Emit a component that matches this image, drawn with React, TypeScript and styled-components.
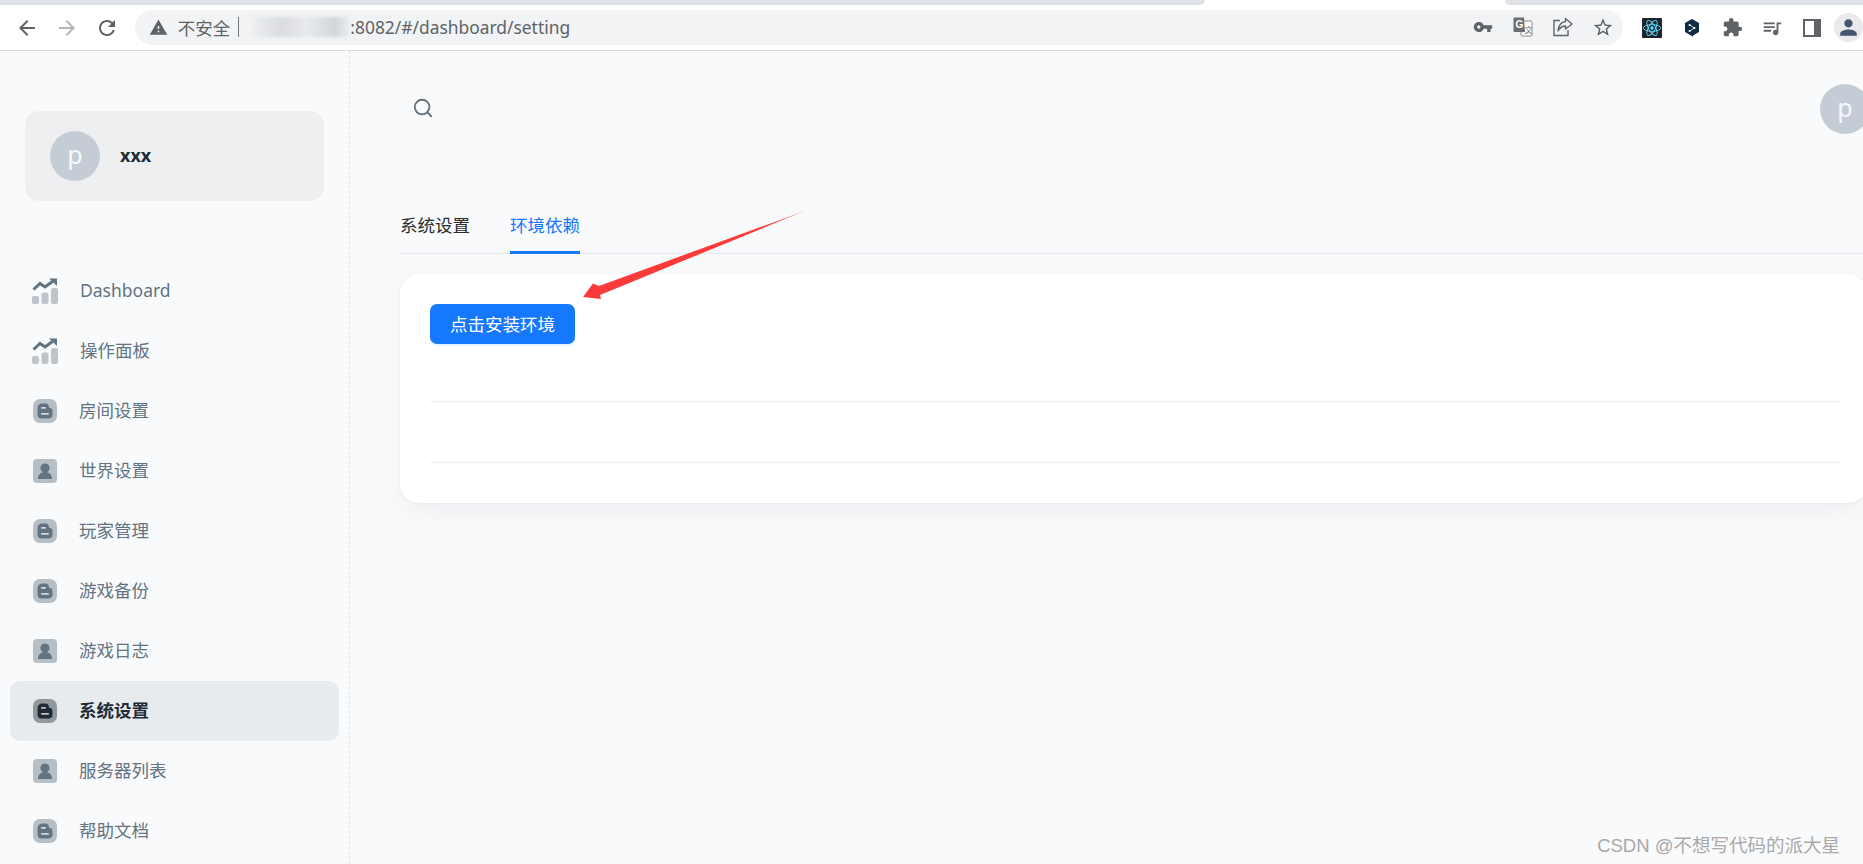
import React from "react";
import styled, { createGlobalStyle } from "styled-components";
import { Search } from "lucide-react";
import {
  MdArrowBack,
  MdArrowForward,
  MdExtension,
  MdPerson,
  MdQueueMusic,
  MdRefresh,
  MdStarBorder,
  MdVpnKey,
  MdWarning,
} from "react-icons/md";

const FONT = `"Noto Sans", "Noto Sans CJK SC", sans-serif`;

const GlobalStyle = createGlobalStyle`
  html, body {
    margin: 0;
    padding: 0;
    background: #f9fafb;
  }
  * {
    box-sizing: border-box;
  }
`;

const Page = styled.div`
  position: relative;
  display: flex;
  flex-direction: column;
  width: 1863px;
  height: 864px;
  overflow: hidden;
  font-family: ${FONT};
  background: #f9fafb;
`;

/* ---------- browser chrome ---------- */

const TabStrip = styled.div`
  display: grid;
  grid-template-columns: 1205px 300px 1fr;
  height: 10px;
  margin-bottom: -5px;
  background: #fff;
`;

const TabPiece = styled.div<{ $left?: boolean; $right?: boolean }>`
  height: 5px;
  background: #dee1e6;
  border-bottom-right-radius: ${(p) => (p.$left ? "6px" : "0")};
  border-bottom-left-radius: ${(p) => (p.$right ? "6px" : "0")};
`;

const TabGap = styled.div`
  height: 5px;
  background: #fff;
`;

const Toolbar = styled.div`
  display: flex;
  align-items: center;
  height: 46px;
  flex: none;
  background: #fff;
  border-bottom: 1px solid #dadce0;
`;

const NavButtons = styled.div`
  display: flex;
  align-items: center;
  gap: 16px;
  width: 135px;
  padding-left: 15px;
`;

const NavIcon = styled.span<{ $off?: boolean }>`
  display: flex;
  color: ${(p) => (p.$off ? "#b4b6b9" : "#5f6368")};
`;

const Omnibox = styled.div`
  display: flex;
  align-items: center;
  width: 1490px;
  height: 35px;
  margin-bottom: 1px;
  padding-left: 14px;
  border-radius: 18px;
  background: #f1f3f4;
  color: #5f6368;
  font-size: 17.4px;
`;

const Insecure = styled.span`
  margin: 0 0 0 10px;
  font-size: 17.5px;
  white-space: nowrap;
`;

const Pipe = styled.span`
  width: 1px;
  height: 20px;
  margin: 0 14px 0 8px;
  background: #70757a;
`;

const BlurredHost = styled.span`
  display: block;
  width: 97px;
  height: 20px;
  border-radius: 4px;
  background: linear-gradient(90deg, #eceef0 0%, #d9dbde 30%, #e8eaec 55%, #d3d6d9 85%, #eceef0 100%);
  filter: blur(1.5px);
`;

const UrlText = styled.span`
  white-space: nowrap;
`;

const OmniActions = styled.div`
  display: flex;
  align-items: center;
  gap: 18px;
  margin-left: auto;
  padding-right: 9px;
  color: #5f6368;
`;

const OmniSlot = styled.span`
  display: flex;
  align-items: center;
  justify-content: center;
  width: 22px;
`;

const Extensions = styled.div`
  display: flex;
  align-items: center;
  gap: 18px;
  margin-left: 18px;
  color: #5f6368;
`;

const ExtSlot = styled.span`
  display: flex;
  align-items: center;
  justify-content: center;
  width: 22px;
  height: 22px;
`;

const Profile = styled.span`
  display: flex;
  align-items: center;
  justify-content: center;
  flex: none;
  width: 29px;
  height: 29px;
  margin-left: 11px;
  border-radius: 50%;
  background: #e8eaed;
  color: #44546f;
`;

/* ---------- dashboard ---------- */

const Body = styled.div`
  display: flex;
  flex: 1;
  min-height: 0;
`;

const Sidebar = styled.aside`
  flex: none;
  width: 350px;
  padding: 60px 10px 0;
  border-right: 1px dashed #dfe3e8;
`;

const Account = styled.div`
  display: flex;
  align-items: center;
  gap: 20px;
  width: 299px;
  height: 90px;
  margin-left: 15px;
  padding-left: 25px;
  border-radius: 14px;
  background: #eeeff1;
`;

const Avatar = styled.div`
  display: flex;
  align-items: center;
  justify-content: center;
  flex: none;
  width: 50px;
  height: 50px;
  border-radius: 50%;
  background: #c4cdd5;
  color: #f7f8f9;
  font-size: 25px;
  line-height: 1;
  padding-bottom: 3px;
`;

const AccountName = styled.span`
  padding-bottom: 2px;
  color: #212b36;
  font-size: 18px;
  font-weight: 700;
`;

const Nav = styled.nav`
  display: flex;
  flex-direction: column;
  margin-top: 60px;
`;

const NavItem = styled.div<{ $active?: boolean }>`
  display: flex;
  align-items: center;
  gap: 22px;
  width: 329px;
  height: 60px;
  padding-left: 22px;
  border-radius: 10px;
  background: ${(p) => (p.$active ? "#e8ebee" : "transparent")};
  color: ${(p) => (p.$active ? "#212b36" : "#637381")};
  font-size: 17.5px;
  font-weight: ${(p) => (p.$active ? 700 : 400)};
`;

const NavLabel = styled.span`
  padding-bottom: 3px;
`;

const Main = styled.main`
  flex: 1;
  min-width: 0;
  padding-left: 50px;
`;

const Header = styled.header`
  display: flex;
  align-items: center;
  justify-content: space-between;
  height: 116px;
  padding-left: 12px;
  margin-right: -7px;
  color: #637381;
`;

const SearchIcon = styled(Search)`
  margin-bottom: 2px;
`;

const Tabs = styled.div`
  display: flex;
  gap: 40px;
  height: 60px;
  margin-top: 27px;
  border-bottom: 1px solid #e6e8eb;
`;

const Tab = styled.div<{ $active?: boolean }>`
  display: flex;
  align-items: center;
  height: 60px;
  padding-top: 3px;
  color: ${(p) => (p.$active ? "#1677ff" : "#2b2b2b")};
  border-bottom: 3px solid ${(p) => (p.$active ? "#1677ff" : "transparent")};
  font-size: 17.5px;
`;

const Card = styled.section`
  height: 229px;
  margin: 20px -4px 0 0;
  padding: 30px 27px 0 30px;
  border-radius: 19px;
  background: #fff;
  box-shadow: 0 0 2px rgba(145, 158, 171, 0.2), 0 12px 24px -4px rgba(145, 158, 171, 0.12);
`;

const InstallButton = styled.button`
  display: block;
  width: 145px;
  height: 40px;
  padding: 0 0 2px;
  border: 0;
  border-radius: 7px;
  background: #1677ff;
  color: #fff;
  font-family: ${FONT};
  font-size: 17.5px;
  box-shadow: 0 2px 0 rgba(5, 145, 255, 0.1);
`;

const DividerRow = styled.div<{ $first?: boolean }>`
  height: ${(p) => (p.$first ? "58px" : "61px")};
  border-bottom: 1px solid #efefef;
`;

const ArrowOverlay = styled.svg`
  position: absolute;
  left: 0;
  top: 0;
  pointer-events: none;
`;

const Watermark = styled.div`
  position: absolute;
  right: 23px;
  bottom: 7px;
  color: #a9a9a9;
  font-family: "Liberation Sans", "Noto Sans CJK SC", sans-serif;
  font-size: 18.5px;
  line-height: 22px;
  white-space: nowrap;
`;

/* ---------- drawn icons ---------- */

const ChartIcon = () => (
  <svg width="26" height="26" viewBox="0 0 26 26">
    <rect x="0" y="18" width="7" height="8" rx="2" fill="#637381" opacity="0.4" />
    <rect x="9.5" y="14.5" width="7" height="11.5" rx="2" fill="#637381" opacity="0.4" />
    <rect x="19" y="10" width="7" height="16" rx="2" fill="#637381" opacity="0.4" />
    <path d="M1.5 11.5 L8 5.5 L13 9 L20.5 3.5" fill="none" stroke="#637381" strokeWidth="3" />
    <path d="M17 0.5 H25 V8 Z" fill="#637381" />
  </svg>
);

const BlogIcon = ({ active }: { active?: boolean }) => {
  const dark = active ? "#212b36" : "#637381";
  return (
    <svg width="24" height="24" viewBox="0 0 24 24" style={{ marginLeft: 1 }}>
      <rect width="24" height="24" rx="7" fill={dark} opacity="0.44" />
      <path
        d="M9.5 4.5 H12.5 C15 4.5 16 6.3 16 8.8 C18.3 9 19.5 10 19.5 12 V15.5 C19.5 18 18 19.5 15.5 19.5 H8.5 C6 19.5 4.5 18 4.5 15.5 V9.5 C4.5 6.5 6.5 4.5 9.5 4.5 Z"
        fill={dark}
      />
      <rect x="8" y="8" width="5" height="1.7" rx="0.8" fill="#f9fafb" opacity="0.75" />
      <rect x="8" y="14" width="8" height="1.7" rx="0.8" fill="#f9fafb" opacity="0.75" />
    </svg>
  );
};

const UserIcon = () => (
  <svg width="24" height="24" viewBox="0 0 24 24" style={{ marginLeft: 1 }}>
    <rect width="24" height="24" rx="4" fill="#637381" opacity="0.44" />
    <circle cx="12" cy="9" r="4.6" fill="#637381" />
    <path d="M5 20 C5 15.5 8 13 12 13 C16 13 19 15.5 19 20 Z" fill="#637381" />
  </svg>
);

const TranslateIcon = () => (
  <svg width="20" height="20" viewBox="0 0 20 20">
    <rect x="8" y="4" width="11" height="15" rx="1" fill="#fff" stroke="#8a8d91" />
    <path d="M1.5 0.5 H11 L12 15 H1.5 C0.9 15 0.5 14.6 0.5 14 V1.5 C0.5 0.9 0.9 0.5 1.5 0.5 Z" fill="#6b6e72" />
    <text x="2.6" y="11" fill="#fff" fontSize="10" fontWeight="700" fontFamily="Liberation Sans">
      G
    </text>
    <text x="11.5" y="16" fill="#6b6e72" fontSize="8" fontFamily="Noto Sans CJK SC">
      文
    </text>
  </svg>
);

const ShareIcon = () => (
  <svg width="20" height="20" viewBox="0 0 20 20" fill="none" stroke="#5f6368" strokeWidth="1.4">
    <path d="M7 3.5 H1 V18.5 H15 V13" />
    <path d="M12.5 1.5 L19 7 L12.5 12 V9 C9 9 7 10.5 5 14 C5.5 9 8 5 12.5 4.5 Z" strokeLinejoin="round" />
  </svg>
);

const ReactLogo = () => (
  <svg width="20" height="20" viewBox="0 0 20 20" fill="none" stroke="#61dafb" strokeWidth="0.9">
    <rect width="20" height="20" rx="1" fill="#20232a" stroke="none" />
    <circle cx="10" cy="10" r="1.7" fill="#61dafb" stroke="none" />
    <ellipse cx="10" cy="10" rx="8.6" ry="3.4" />
    <ellipse cx="10" cy="10" rx="8.6" ry="3.4" transform="rotate(60 10 10)" />
    <ellipse cx="10" cy="10" rx="8.6" ry="3.4" transform="rotate(120 10 10)" />
  </svg>
);

const DeeplLogo = () => (
  <svg width="16" height="18" viewBox="0 0 16 18">
    <path d="M8 0 L15 4 V13 L9 16.5 L8.5 18 L7.5 16.7 L1 13 V4 Z" fill="#0f2b46" />
    <circle cx="5.6" cy="6" r="1" fill="#fff" />
    <circle cx="10.5" cy="9" r="1" fill="#fff" />
    <circle cx="5.6" cy="12" r="1" fill="#fff" />
    <path d="M5.6 6 L10.5 9 L5.6 12" fill="none" stroke="#fff" strokeWidth="0.8" />
  </svg>
);

const SidePanelIcon = () => (
  <svg width="18" height="18" viewBox="0 0 18 18">
    <path d="M0 0 H18 V18 H0 Z M2 2 V16 H11 V2 Z" fill="#5f6368" fillRule="evenodd" />
  </svg>
);

const navItems = [
  { label: "Dashboard", icon: "chart" },
  { label: "操作面板", icon: "chart" },
  { label: "房间设置", icon: "blog" },
  { label: "世界设置", icon: "user" },
  { label: "玩家管理", icon: "blog" },
  { label: "游戏备份", icon: "blog" },
  { label: "游戏日志", icon: "user" },
  { label: "系统设置", icon: "blog", active: true },
  { label: "服务器列表", icon: "user" },
  { label: "帮助文档", icon: "blog" },
];

const renderNavIcon = (icon: string, active?: boolean) => {
  if (icon === "chart") return <ChartIcon />;
  if (icon === "user") return <UserIcon />;
  return <BlogIcon active={active} />;
};

const App = () => {
  return (
    <Page>
      <GlobalStyle />
      <TabStrip>
        <TabPiece $left />
        <TabGap />
        <TabPiece $right />
      </TabStrip>
      <Toolbar>
        <NavButtons>
          <NavIcon>
            <MdArrowBack size={24} />
          </NavIcon>
          <NavIcon $off>
            <MdArrowForward size={24} />
          </NavIcon>
          <NavIcon>
            <MdRefresh size={24} />
          </NavIcon>
        </NavButtons>
        <Omnibox>
          <MdWarning size={19} />
          <Insecure>不安全</Insecure>
          <Pipe />
          <BlurredHost />
          <UrlText>:8082/#/dashboard/setting</UrlText>
          <OmniActions>
            <OmniSlot>
              <MdVpnKey size={20} />
            </OmniSlot>
            <OmniSlot>
              <TranslateIcon />
            </OmniSlot>
            <OmniSlot>
              <ShareIcon />
            </OmniSlot>
            <OmniSlot>
              <MdStarBorder size={23} />
            </OmniSlot>
          </OmniActions>
        </Omnibox>
        <Extensions>
          <ExtSlot>
            <ReactLogo />
          </ExtSlot>
          <ExtSlot>
            <DeeplLogo />
          </ExtSlot>
          <ExtSlot>
            <MdExtension size={21} />
          </ExtSlot>
          <ExtSlot>
            <MdQueueMusic size={24} />
          </ExtSlot>
          <ExtSlot>
            <SidePanelIcon />
          </ExtSlot>
        </Extensions>
        <Profile>
          <MdPerson size={25} />
        </Profile>
      </Toolbar>
      <Body>
        <Sidebar>
          <Account>
            <Avatar>p</Avatar>
            <AccountName>xxx</AccountName>
          </Account>
          <Nav>
            {navItems.map((item) => (
              <NavItem key={item.label} $active={item.active}>
                {renderNavIcon(item.icon, item.active)}
                <NavLabel>{item.label}</NavLabel>
              </NavItem>
            ))}
          </Nav>
        </Sidebar>
        <Main>
          <Header>
            <SearchIcon size={22} strokeWidth={2} />
            <Avatar>p</Avatar>
          </Header>
          <Tabs>
            <Tab>系统设置</Tab>
            <Tab $active>环境依赖</Tab>
          </Tabs>
          <Card>
            <InstallButton>点击安装环境</InstallButton>
            <DividerRow $first />
            <DividerRow />
          </Card>
        </Main>
      </Body>
      <ArrowOverlay width="1863" height="864" viewBox="0 0 1863 864">
        <defs>
          <linearGradient id="arrowFade" x1="807" y1="210" x2="583" y2="297" gradientUnits="userSpaceOnUse">
            <stop offset="0" stopColor="#fb3a3a" stopOpacity="0.35" />
            <stop offset="0.2" stopColor="#fb3a3a" />
            <stop offset="1" stopColor="#fb3a3a" />
          </linearGradient>
        </defs>
        <path d="M807 210 L599 286 L593 283.5 L583 297 L601 299 L600 295 Z" fill="url(#arrowFade)" />
      </ArrowOverlay>
      <Watermark>CSDN @不想写代码的派大星</Watermark>
    </Page>
  );
};

export default App;
